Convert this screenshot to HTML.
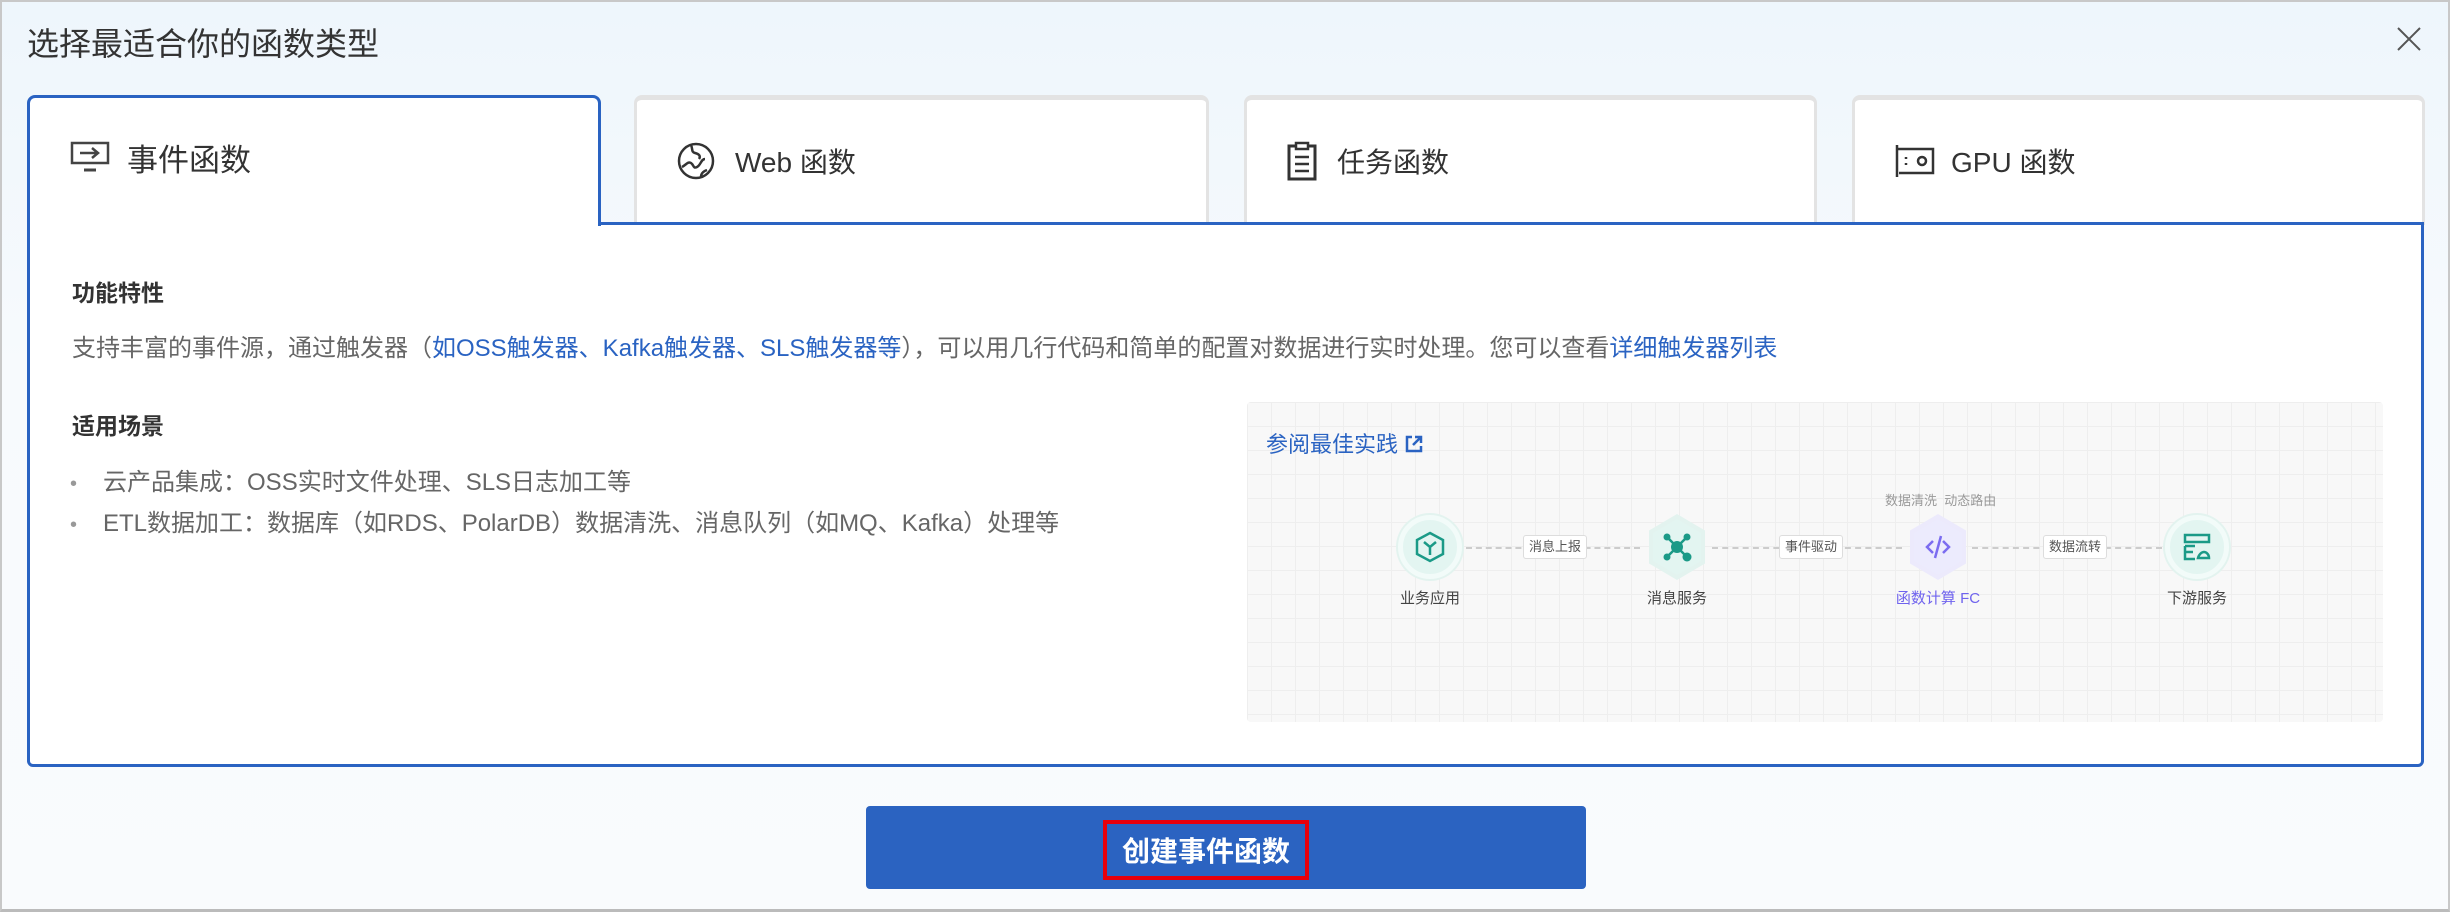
<!DOCTYPE html>
<html><head><meta charset="utf-8">
<style>
*{box-sizing:border-box;margin:0;padding:0}
body{width:2450px;height:912px;overflow:hidden;font-family:"Liberation Sans","Noto Sans CJK SC",sans-serif;background:linear-gradient(180deg,#eef6fc 0%,#f7fafd 40%,#f9fbfd 100%);position:relative;color:#333}
.frame{position:absolute;left:0;top:0;width:2450px;height:912px;border:2px solid #c8c8c8;border-bottom:3px solid #bbb}
.abs{position:absolute;white-space:nowrap}
.tab{position:absolute;top:95px;height:130px;background:#fff;border:3px solid #e3e3e3;border-top-width:5px;border-radius:8px 8px 0 0;border-bottom:none}
.tabtxt{position:absolute;top:0;height:122px;display:flex;align-items:center;font-size:28px;color:#333}
.panel{position:absolute;left:27px;top:222px;width:2397px;height:545px;background:#fff;border:3px solid #2a63c2;border-radius:0 0 6px 6px}
.active{position:absolute;left:27px;top:95px;width:574px;height:131px;background:#fff;border:3px solid #2a63c2;border-bottom:none;border-radius:8px 8px 0 0;z-index:2}
.blue{color:#2a63c2}
.diagram{position:absolute;left:1247px;top:402px;width:1136px;height:320px;background-color:#f8f8f8;background-image:linear-gradient(#eeeeee 1px,transparent 1px),linear-gradient(90deg,#eeeeee 1px,transparent 1px);background-size:24px 24px;border-radius:4px}
.node{position:absolute;width:64px;height:64px;border-radius:50%;background:#e3f5f1;border:5px solid #f2fbf9;box-shadow:0 0 0 2px #e3f3ef;display:flex;align-items:center;justify-content:center}
.hexo{position:absolute;width:56px;height:66px;clip-path:polygon(50% 0,100% 25%,100% 75%,50% 100%,0 75%,0 25%);display:flex;align-items:center;justify-content:center}
.hexi{width:48px;height:56px;clip-path:polygon(50% 0,100% 25%,100% 75%,50% 100%,0 75%,0 25%);display:flex;align-items:center;justify-content:center}
.lbl{position:absolute;font-size:15px;color:#444;transform:translateX(-50%)}
.edge{position:absolute;height:0;border-top:2px dashed #ccc;top:547px}
.elbl{position:absolute;top:535px;height:24px;padding:0 5px;font-size:13px;line-height:22px;color:#555;background:#fff;border:1px solid #ddd;border-radius:3px;transform:translateX(-50%)}
</style></head><body>
<div class="frame"></div>
<div class="abs" style="left:27px;top:19px;font-size:32px;color:#333">选择最适合你的函数类型</div>
<svg class="abs" style="left:2396px;top:26px" width="26" height="26" viewBox="0 0 26 26"><path d="M2 2L24 24M24 2L2 24" stroke="#555" stroke-width="2"/></svg>

<div class="tab" style="left:634px;width:575px"><div class="tabtxt" style="left:40px">
<svg width="38" height="40" viewBox="0 0 38 40" style="margin-right:20px"><circle cx="19" cy="20" r="17" fill="none" stroke="#333" stroke-width="2.5"/><path d="M5 26c4-2 6-6 9-4s2 6 6 4 4-8 8-8M14 4c2 4 0 7 4 8s6 3 4 6M24 36c0-4 3-6 6-7" fill="none" stroke="#333" stroke-width="2.5"/></svg>Web 函数</div></div>
<div class="tab" style="left:1244px;width:573px"><div class="tabtxt" style="left:40px">
<svg width="30" height="40" viewBox="0 0 30 40" style="margin-right:20px"><rect x="2" y="5" width="26" height="33" fill="none" stroke="#333" stroke-width="3"/><rect x="9" y="2" width="12" height="6" fill="#fff" stroke="#333" stroke-width="2.5"/><path d="M8 16h14M8 23h14M8 30h14" stroke="#333" stroke-width="2.5"/></svg>任务函数</div></div>
<div class="tab" style="left:1852px;width:573px"><div class="tabtxt" style="left:40px">
<svg width="40" height="36" viewBox="0 0 40 36" style="margin-right:16px"><path d="M2 2v32M2 6h36v24H4" fill="none" stroke="#333" stroke-width="2.5"/><circle cx="27" cy="18" r="4" fill="none" stroke="#333" stroke-width="2.5"/><path d="M11 14v2M11 20v2" stroke="#333" stroke-width="2.5"/></svg>GPU 函数</div></div>

<div class="panel"></div>
<div class="active"><div class="tabtxt" style="left:40px;font-size:31px;height:130px;top:-6px">
<svg width="40" height="32" viewBox="0 0 40 32" style="margin-right:17px"><rect x="2" y="2" width="36" height="20" fill="none" stroke="#444" stroke-width="2.5"/><path d="M10 12h18M22 7l6 5-6 5" fill="none" stroke="#444" stroke-width="2.5"/><path d="M14 29h12" stroke="#444" stroke-width="3"/></svg>事件函数</div></div>

<div class="abs" style="left:72px;top:274px;font-size:23px;font-weight:bold;color:#333">功能特性</div>
<div class="abs" style="left:72px;top:328px;font-size:24px;color:#666">支持丰富的事件源，通过触发器（<span class="blue">如OSS触发器、Kafka触发器、SLS触发器等</span>），可以用几行代码和简单的配置对数据进行实时处理。您可以查看<span class="blue">详细触发器列表</span></div>
<div class="abs" style="left:72px;top:407px;font-size:23px;font-weight:bold;color:#333">适用场景</div>
<div class="abs" style="left:70px;top:463px;font-size:24px;color:#666;line-height:39px">
<div><span style="color:#999;margin-right:26px;font-size:20px">•</span>云产品集成：OSS实时文件处理、SLS日志加工等</div>
<div><span style="color:#999;margin-right:26px;font-size:20px">•</span>ETL数据加工：数据库（如RDS、PolarDB）数据清洗、消息队列（如MQ、Kafka）处理等</div></div>

<div class="diagram"></div>
<div class="abs blue" style="left:1266px;top:427px;font-size:22px">参阅最佳实践 <svg width="20" height="20" viewBox="0 0 20 20" style="vertical-align:-2px"><path d="M8 3H3v14h14v-5M11 3h6v6M17 3l-8 8" fill="none" stroke="#2a63c2" stroke-width="2.5"/></svg></div>
<div class="abs" style="left:1885px;top:490px;font-size:13px;color:#999">数据清洗&nbsp;&nbsp;动态路由</div>

<div class="edge" style="left:1466px;width:174px"></div>
<div class="edge" style="left:1712px;width:190px"></div>
<div class="edge" style="left:1972px;width:190px"></div>
<div class="elbl" style="left:1555px">消息上报</div>
<div class="elbl" style="left:1811px">事件驱动</div>
<div class="elbl" style="left:2075px">数据流转</div>

<div class="node" style="left:1398px;top:515px"><svg width="30" height="32" viewBox="0 0 30 32"><path d="M15 2L28 9v14L15 30 2 23V9z" fill="none" stroke="#1b9a87" stroke-width="2.5"/><path d="M9 11l6 5 6-5M15 16v8" fill="none" stroke="#1b9a87" stroke-width="2.5"/></svg></div>
<div class="hexo" style="left:1649px;top:514px;background:#e3f3ef"><div class="hexi" style="background:#e3f5f1"><svg width="30" height="30" viewBox="0 0 30 30"><circle cx="15" cy="15" r="6" fill="#1b9a87"/><circle cx="5" cy="5" r="3.5" fill="#1b9a87"/><circle cx="25" cy="5" r="3.5" fill="#1b9a87"/><circle cx="5" cy="25" r="3.5" fill="#1b9a87"/><circle cx="25" cy="25" r="4.5" fill="#1b9a87"/><path d="M5 5l20 20M25 5L5 25" stroke="#1b9a87" stroke-width="2.5"/></svg></div></div>
<div class="hexo" style="left:1910px;top:514px;background:#eceafc"><div class="hexi" style="background:#ecebfd"><svg width="30" height="30" viewBox="0 0 30 30"><path d="M10 9l-6 6 6 6M20 9l6 6-6 6M18 4L12 26" fill="none" stroke="#7b6cf0" stroke-width="2.5"/></svg></div></div>
<div class="node" style="left:2165px;top:515px"><svg width="28" height="28" viewBox="0 0 28 28"><rect x="2" y="2" width="24" height="7" fill="none" stroke="#1b9a87" stroke-width="2.5"/><path d="M2 13h10M2 13v13h10M2 19h8" fill="none" stroke="#1b9a87" stroke-width="2.5"/><path d="M15 25h11c0-4-3-6-5-6s-5 2-6 6z" fill="none" stroke="#1b9a87" stroke-width="2.5"/></svg></div>
<div class="lbl" style="left:1430px;top:587px">业务应用</div>
<div class="lbl" style="left:1677px;top:587px">消息服务</div>
<div class="lbl" style="left:1938px;top:587px;color:#6f63ee">函数计算 FC</div>
<div class="lbl" style="left:2197px;top:587px">下游服务</div>

<div class="abs" style="left:866px;top:806px;width:720px;height:83px;background:#2b63c1;border-radius:4px"></div>
<div class="abs" style="left:1103px;top:820px;width:206px;height:60px;border:4px solid #e8000c;color:#fff;font-size:28px;font-weight:bold;display:flex;align-items:center;justify-content:center">创建事件函数</div>
</body></html>
